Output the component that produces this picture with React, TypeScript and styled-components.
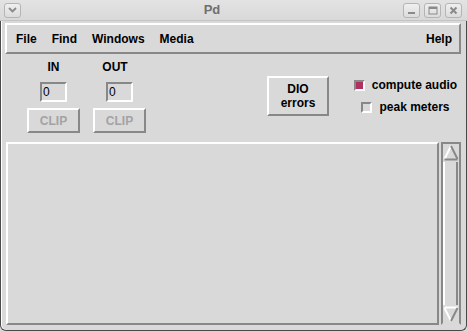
import React from "react"
import styled, { createGlobalStyle, css } from "styled-components"

const LIGHT = "#ffffff"
const DARK = "#888888"
const FACE = "#d9d9d9"

const GlobalStyle = createGlobalStyle`
  html, body {
    margin: 0;
    padding: 0;
    background: ${FACE};
  }
  body {
    font-family: "Liberation Sans", Arial, Helvetica, sans-serif;
  }
`

const raised = css`
  border-style: solid;
  border-width: 2px;
  border-color: ${LIGHT} ${DARK} ${DARK} ${LIGHT};
`

const sunken = css`
  border-style: solid;
  border-width: 2px;
  border-color: ${DARK} ${LIGHT} ${LIGHT} ${DARK};
`

const Window = styled.div`
  width: 467px;
  height: 331px;
  display: flex;
  flex-direction: column;
  background: ${FACE};
  overflow: hidden;
`

const TitleBar = styled.div`
  height: 20px;
  flex: none;
  display: flex;
  align-items: center;
  padding: 0 5px 0 4px;
  background: linear-gradient(#e3e3e3, #d9d9d9);
  border-bottom: 1px solid #c4c4c4;
`

const Title = styled.div`
  flex: 1;
  text-align: center;
  font-size: 13px;
  font-weight: bold;
  color: #6f6f6f;
  line-height: 20px;
`

const TitleButtons = styled.div`
  display: flex;
  gap: 4px;
`

const TitleButton = styled.div`
  width: 15px;
  height: 13px;
  border: 1px solid #b4b4b4;
  border-radius: 3px;
  background: linear-gradient(#efefef, #dcdcdc);
  display: flex;
  align-items: center;
  justify-content: center;
`

const Body = styled.div`
  flex: 1;
  display: flex;
  flex-direction: column;
  padding: 2px 5px 5px 4px;
  border: 1px solid #4a4a4a;
  border-top: none;
  border-radius: 0 0 6px 6px;
  box-shadow: inset 1px 0 0 ${LIGHT};
`

const MenuBar = styled.div`
  ${raised};
  height: 27px;
  flex: none;
  display: flex;
  align-items: center;
  gap: 15px;
  padding: 0 7px 0 9px;
`

const MenuItem = styled.span<{ $right?: boolean }>`
  font-size: 12px;
  font-weight: bold;
  color: #000;
  ${p => p.$right && "margin-left: auto;"}
`

const Controls = styled.div`
  height: 88px;
  flex: none;
  display: flex;
  align-items: flex-start;
  padding-left: 22px;
`

const IOGrid = styled.div`
  display: grid;
  grid-template-columns: 53px 53px;
  column-gap: 13px;
  justify-items: center;
  padding-top: 6px;
`

const IOLabel = styled.div<{ $shift?: number }>`
  font-size: 12px;
  font-weight: bold;
  line-height: 14px;
  margin-right: ${p => p.$shift || 0}px;
`

const Entry = styled.div`
  ${sunken};
  width: 23px;
  height: 16px;
  margin-top: 8px;
  box-sizing: content-box;
  font-size: 12px;
  line-height: 16px;
  padding-left: 0;
  text-indent: 1px;
`

const ClipButton = styled.div`
  ${raised};
  width: 49px;
  height: 21px;
  margin-top: 6px;
  display: flex;
  align-items: center;
  justify-content: center;
  font-size: 12px;
  font-weight: bold;
  color: #a3a3a3;
`

const DioButton = styled.div`
  ${raised};
  width: 58px;
  height: 36px;
  margin: 22px 0 0 121px;
  display: flex;
  flex-direction: column;
  align-items: center;
  justify-content: center;
  font-size: 12px;
  font-weight: bold;
  line-height: 14px;
  color: #000;
`

const Checks = styled.div`
  width: 111px;
  margin: 20px 0 0 21px;
  display: flex;
  flex-direction: column;
  align-items: center;
`

const CheckRow = styled.div`
  height: 22px;
  display: flex;
  align-items: center;
  gap: 7px;
  font-size: 12px;
  font-weight: bold;
`

const CheckBox = styled.span<{ $on?: boolean }>`
  ${sunken};
  width: 7px;
  height: 7px;
  background: ${p => (p.$on ? "#b03060" : FACE)};
`

const Console = styled.div`
  flex: 1;
  display: flex;
  gap: 2px;
  padding-left: 1px;
`

const TextArea = styled.div`
  ${raised};
  flex: 1;
`

const ScrollBar = styled.div`
  width: 16px;
  display: flex;
  flex-direction: column;
  border: 2px solid ${DARK};
  border-bottom-color: ${FACE};
`

const Arrow = styled.svg`
  display: block;
  flex: none;
`

const Slider = styled.div`
  flex: 1;
  margin: 1px 1px 1px 0;
  border-left: 2px solid ${LIGHT};
  border-right: 2px solid ${DARK};
`

const UpArrow = () => (
  <Arrow width="16" height="17" viewBox="0 0 16 17">
    <polygon points="1.5,15 8,2 14.5,15" fill={FACE} />
    <line x1="1.5" y1="15" x2="8" y2="2" stroke={LIGHT} strokeWidth="2" />
    <line x1="8" y1="2" x2="14.5" y2="15" stroke={DARK} strokeWidth="2" />
    <line x1="1.5" y1="15.5" x2="14.5" y2="15.5" stroke={DARK} strokeWidth="2" />
  </Arrow>
)

const DownArrow = () => (
  <Arrow width="16" height="17" viewBox="0 0 16 17">
    <polygon points="1.5,2 8,15 14.5,2" fill={FACE} />
    <line x1="1.5" y1="1.5" x2="14.5" y2="1.5" stroke={LIGHT} strokeWidth="2" />
    <line x1="1.5" y1="2" x2="8" y2="15" stroke={LIGHT} strokeWidth="2" />
    <line x1="8" y1="15" x2="14.5" y2="2" stroke={DARK} strokeWidth="2" />
  </Arrow>
)

export default function App() {
  return (
    <>
      <GlobalStyle />
      <Window>
        <TitleBar>
          <TitleButton>
            <svg width="9" height="6" viewBox="0 0 9 6">
              <polyline points="1,1 4.5,4.5 8,1" fill="none" stroke="#8a8a8a" strokeWidth="1.8" />
            </svg>
          </TitleButton>
          <Title>Pd</Title>
          <TitleButtons>
            <TitleButton>
              <svg width="9" height="9" viewBox="0 0 9 9">
                <rect x="1" y="6" width="7" height="2" fill="#8a8a8a" />
              </svg>
            </TitleButton>
            <TitleButton>
              <svg width="10" height="9" viewBox="0 0 10 9">
                <rect x="1" y="1" width="8" height="7" fill="none" stroke="#8a8a8a" strokeWidth="1" />
                <rect x="1" y="1" width="8" height="2" fill="#8a8a8a" />
              </svg>
            </TitleButton>
            <TitleButton>
              <svg width="9" height="9" viewBox="0 0 9 9">
                <path d="M1.5 1.5 L7.5 7.5 M7.5 1.5 L1.5 7.5" stroke="#8a8a8a" strokeWidth="2" />
              </svg>
            </TitleButton>
          </TitleButtons>
        </TitleBar>
        <Body>
          <MenuBar>
            <MenuItem>File</MenuItem>
            <MenuItem>Find</MenuItem>
            <MenuItem>Windows</MenuItem>
            <MenuItem>Media</MenuItem>
            <MenuItem $right>Help</MenuItem>
          </MenuBar>
          <Controls>
            <IOGrid>
              <IOLabel>IN</IOLabel>
              <IOLabel $shift={9}>OUT</IOLabel>
              <Entry>0</Entry>
              <Entry>0</Entry>
              <ClipButton>CLIP</ClipButton>
              <ClipButton>CLIP</ClipButton>
            </IOGrid>
            <DioButton>
              <span>DIO</span>
              <span>errors</span>
            </DioButton>
            <Checks>
              <CheckRow>
                <CheckBox $on />
                compute audio
              </CheckRow>
              <CheckRow>
                <CheckBox />
                peak meters
              </CheckRow>
            </Checks>
          </Controls>
          <Console>
            <TextArea />
            <ScrollBar>
              <UpArrow />
              <Slider />
              <DownArrow />
            </ScrollBar>
          </Console>
        </Body>
      </Window>
    </>
  )
}
